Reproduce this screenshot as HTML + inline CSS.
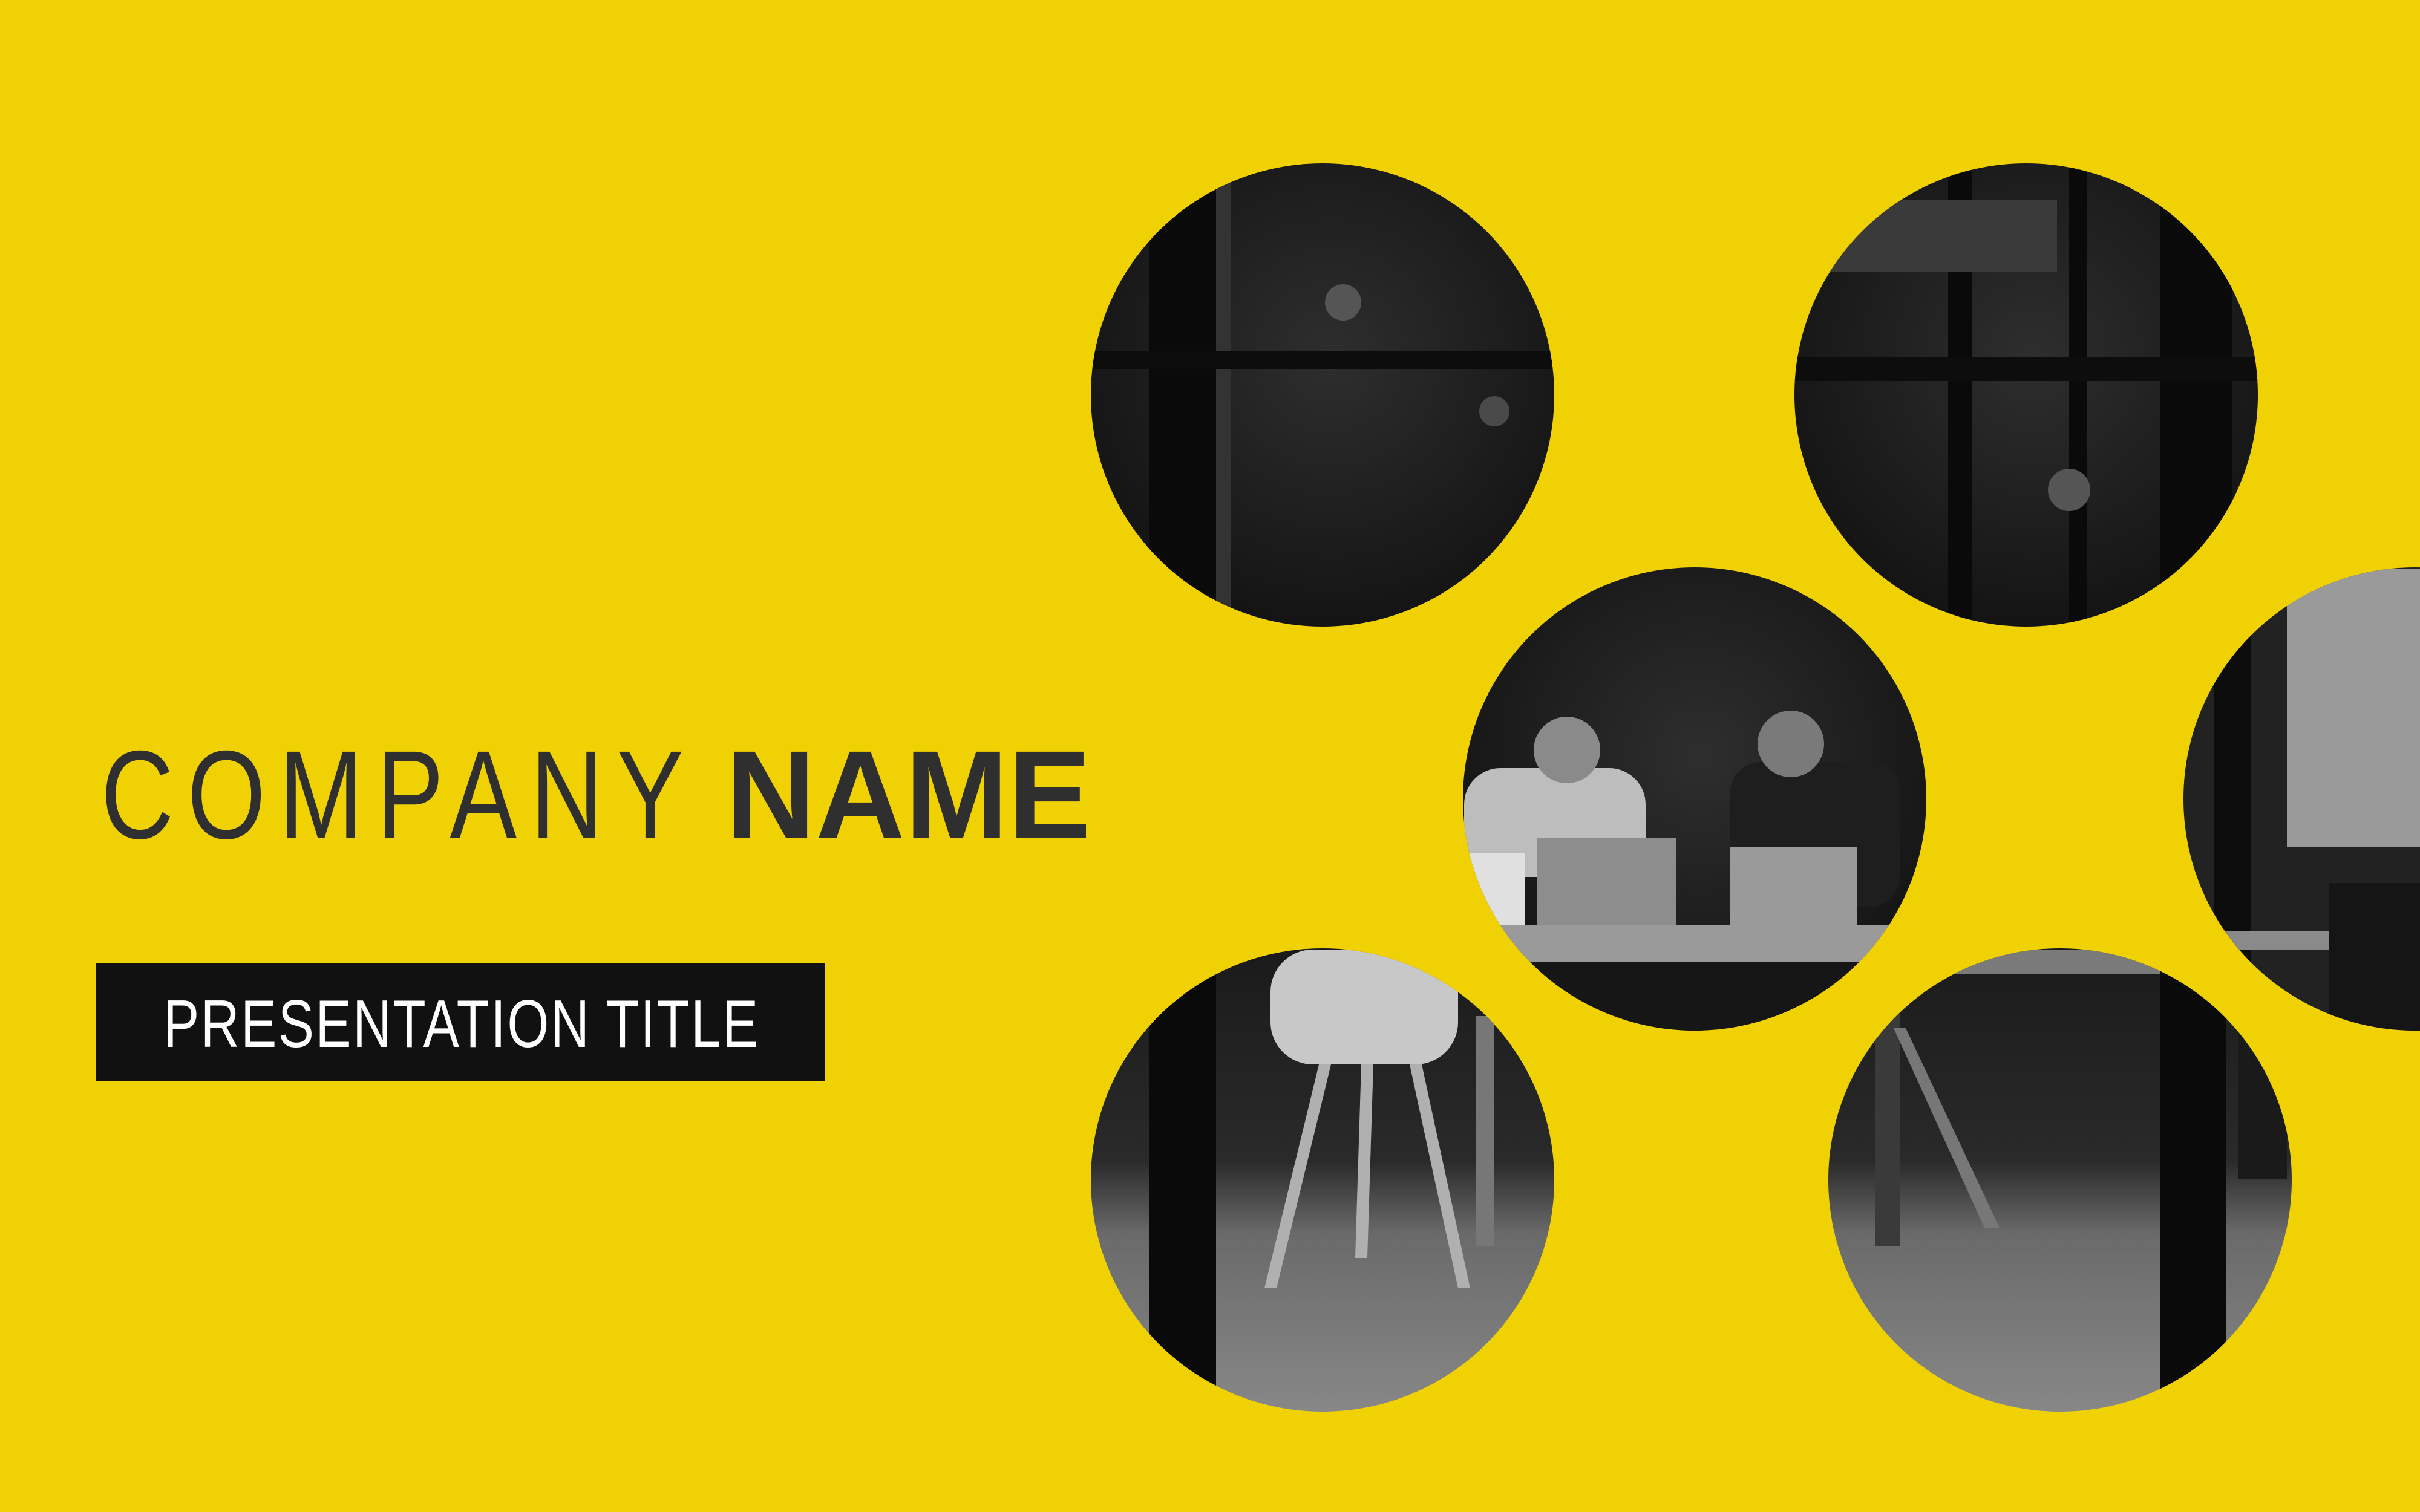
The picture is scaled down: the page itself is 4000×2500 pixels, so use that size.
<!DOCTYPE html>
<html><head><meta charset="utf-8"><style>html,body{margin:0;padding:0;background:#F0D204;overflow:hidden}svg{display:block}</style></head>
<body>
<svg width="4000" height="2500" viewBox="0 0 4000 2500" xmlns="http://www.w3.org/2000/svg">
<defs>
<radialGradient id="dk" cx="50%" cy="40%" r="60%"><stop offset="0" stop-color="#2e2e2e"/><stop offset="1" stop-color="#121212"/></radialGradient>
<linearGradient id="fl" x1="0" y1="0" x2="0" y2="1"><stop offset="0" stop-color="#1a1a1a"/><stop offset="0.45" stop-color="#2a2a2a"/><stop offset="0.6" stop-color="#6a6a6a"/><stop offset="1" stop-color="#8a8a8a"/></linearGradient>
<clipPath id="c1"><circle cx="2186" cy="653" r="383"/></clipPath>
<clipPath id="c2"><circle cx="3349" cy="653" r="383"/></clipPath>
<clipPath id="c3"><circle cx="2801" cy="1321" r="383"/></clipPath>
<clipPath id="c4"><circle cx="3992" cy="1321" r="383"/></clipPath>
<clipPath id="c5"><circle cx="2186" cy="1951" r="383"/></clipPath>
<clipPath id="c6"><circle cx="3405" cy="1951" r="383"/></clipPath>
</defs>
<rect width="4000" height="2500" fill="#F0D204"/>

<g clip-path="url(#c1)"><rect x="1800" y="270" width="800" height="800" fill="url(#dk)"/>
<rect x="1900" y="270" width="110" height="800" fill="#0a0a0a"/><rect x="2010" y="270" width="25" height="800" fill="#333"/>
<rect x="1800" y="580" width="800" height="30" fill="#0c0c0c"/><circle cx="2220" cy="500" r="30" fill="#555"/><circle cx="2470" cy="680" r="25" fill="#4a4a4a"/></g>

<g clip-path="url(#c2)"><rect x="2960" y="270" width="800" height="800" fill="url(#dk)"/>
<rect x="3220" y="270" width="40" height="800" fill="#0a0a0a"/><rect x="3420" y="270" width="30" height="800" fill="#0a0a0a"/><rect x="3570" y="270" width="120" height="800" fill="#0a0a0a"/>
<rect x="2960" y="590" width="800" height="40" fill="#0d0d0d"/><rect x="3000" y="330" width="400" height="120" fill="#3a3a3a"/><circle cx="3420" cy="810" r="35" fill="#555"/></g>

<g clip-path="url(#c3)"><rect x="2410" y="930" width="800" height="800" fill="url(#dk)"/>
<rect x="2420" y="1270" width="300" height="180" rx="60" fill="#bdbdbd"/><circle cx="2590" cy="1240" r="55" fill="#8a8a8a"/>
<rect x="2860" y="1260" width="280" height="240" rx="50" fill="#1e1e1e"/><circle cx="2960" cy="1230" r="55" fill="#7a7a7a"/>
<rect x="2540" y="1385" width="230" height="150" fill="#8d8d8d"/><rect x="2860" y="1400" width="210" height="130" fill="#9a9a9a"/><rect x="2430" y="1410" width="90" height="120" fill="#e0e0e0"/>
<rect x="2410" y="1530" width="800" height="60" fill="#9a9a9a"/><rect x="2410" y="1590" width="800" height="150" fill="#161616"/></g>

<g clip-path="url(#c4)"><rect x="3600" y="930" width="400" height="800" fill="#222"/>
<rect x="3660" y="990" width="60" height="700" fill="#0c0c0c"/><rect x="3780" y="940" width="220" height="460" fill="#9a9a9a"/>
<rect x="3600" y="1540" width="400" height="30" fill="#8a8a8a"/><rect x="3850" y="1460" width="150" height="250" fill="#151515"/></g>

<g clip-path="url(#c5)"><rect x="1800" y="1560" width="800" height="800" fill="url(#fl)"/>
<rect x="1900" y="1560" width="110" height="800" fill="#0a0a0a"/>
<rect x="2100" y="1570" width="310" height="190" rx="70" fill="#c8c8c8"/>
<path d="M2180 1760 L2090 2130 L2110 2130 L2200 1760 Z M2330 1760 L2410 2130 L2430 2130 L2350 1760 Z M2250 1760 L2240 2080 L2260 2080 L2270 1760Z" fill="#b0b0b0"/>
<rect x="2440" y="1680" width="30" height="380" fill="#777"/></g>

<g clip-path="url(#c6)"><rect x="3020" y="1560" width="800" height="800" fill="url(#fl)"/>
<rect x="3020" y="1570" width="800" height="40" fill="#7a7a7a"/>
<rect x="3100" y="1610" width="40" height="450" fill="#3a3a3a"/><path d="M3130 1700 L3280 2030 L3305 2030 L3150 1700Z" fill="#777"/>
<rect x="3570" y="1560" width="110" height="800" fill="#0a0a0a"/><rect x="3700" y="1600" width="80" height="350" fill="#1a1a1a"/></g>

<g transform="translate(167,1386) scale(0.8,1)"><text x="0" y="0" textLength="1204" lengthAdjust="spacing" font-family="Liberation Sans, sans-serif" font-size="208" fill="#2f2f2f">COMPANY</text></g>
<text x="1200" y="1386" textLength="603" lengthAdjust="spacingAndGlyphs" font-family="Liberation Sans, sans-serif" font-weight="bold" font-size="208" fill="#2f2f2f">NAME</text>
<rect x="159" y="1592" width="1204" height="196" fill="#111"/>
<g transform="translate(270,1731) scale(0.8,1)"><text x="0" y="0" textLength="1229" lengthAdjust="spacing" font-family="Liberation Sans, sans-serif" font-size="111" fill="#fff">PRESENTATION TITLE</text></g>
</svg>
</body></html>
